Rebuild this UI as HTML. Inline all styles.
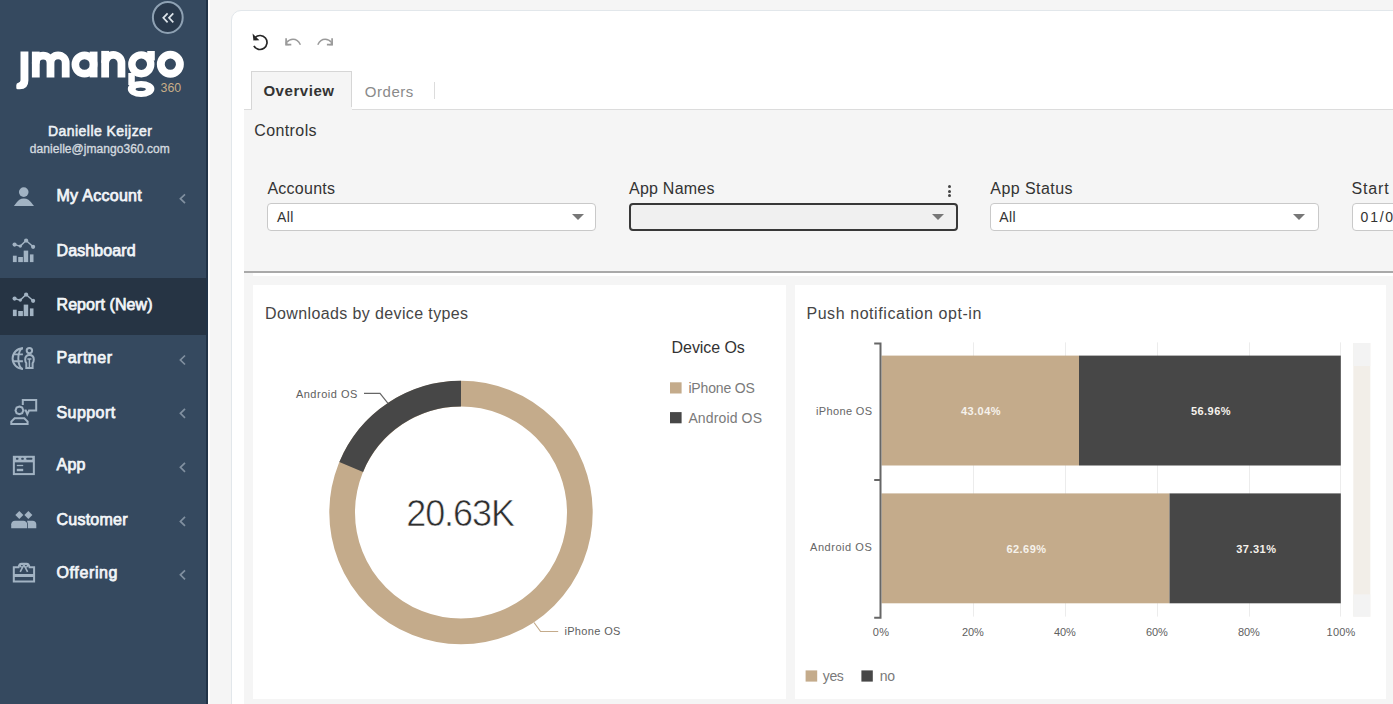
<!DOCTYPE html>
<html><head><meta charset="utf-8"><title>jmango360 Report</title>
<style>
*{box-sizing:border-box}
html,body{margin:0;padding:0}
body{width:1393px;height:704px;overflow:hidden;position:relative;background:#f5f5f5;font-family:"Liberation Sans",sans-serif}
.abs{position:absolute}
.t{position:absolute;white-space:nowrap;line-height:1;font-family:"Liberation Sans",sans-serif}
#sb{left:0;top:0;width:206px;height:704px;background:#35495f}
#sbedge{left:206px;top:0;width:2px;height:704px;background:#223448}
#sbw{left:208px;top:0;width:2px;height:704px;background:#fdfdfd}
#active{left:0;top:278px;width:206px;height:57px;background:#263444}
#card{left:230.6px;top:9.8px;width:1300px;height:900px;background:#fff;border:1px solid #e2e7eb;border-radius:10px}
#content{left:244px;top:108.5px;width:1200px;height:700px;background:#f5f5f5;border-top:1px solid #dcdcdc}
#tab{left:250.5px;top:71.2px;width:101.6px;height:38.3px;background:#f5f5f5;border:1px solid #d6d6d6;border-bottom:none}
#tabsep{left:434px;top:81.5px;width:1px;height:17.5px;background:#dcdcdc}
.sel{position:absolute;top:202.7px;height:28px;background:#fff;border:1.3px solid #c9c9c9;border-radius:4px}
.arr{position:absolute;width:0;height:0;border-left:6px solid transparent;border-right:6px solid transparent;border-top:6.5px solid #777}
#hline{left:244px;top:270.8px;width:1200px;height:2px;background:#a9a9a9}
#wstrip{left:253px;top:272.8px;width:1200px;height:3.7px;background:#fff}
.cc{position:absolute;background:#fff;top:285.3px;height:413.3px}
</style></head>
<body>
<div id="sb" class="abs"></div>
<div id="active" class="abs"></div>
<div id="sbedge" class="abs"></div>
<div id="sbw" class="abs"></div>
<div id="card" class="abs"></div>
<div id="tab" class="abs"></div>
<div id="content" class="abs"></div>
<div id="tab2" class="abs" style="left:251.5px;top:107px;width:100px;height:3px;background:#f5f5f5"></div>
<div id="tabsep" class="abs"></div>
<div class="sel" style="left:267.4px;width:329px"></div>
<div class="sel" style="left:628.5px;width:329.5px;background:#f0f0f0;border:2.2px solid #383838"></div>
<div class="sel" style="left:990.3px;width:328.5px"></div>
<div class="sel" style="left:1351.6px;width:100px"></div>
<div class="arr" style="left:571.6px;top:214.2px"></div>
<div class="arr" style="left:932.4px;top:214.2px"></div>
<div class="arr" style="left:1293.4px;top:214.2px"></div>
<div class="abs" style="left:947.6px;top:185.3px;width:3px;height:3px;border-radius:50%;background:#444"></div>
<div class="abs" style="left:947.6px;top:189.6px;width:3px;height:3px;border-radius:50%;background:#444"></div>
<div class="abs" style="left:947.6px;top:193.9px;width:3px;height:3px;border-radius:50%;background:#444"></div>
<div id="hline" class="abs"></div>
<div id="wstrip" class="abs"></div>
<div class="cc" style="left:252.6px;width:533px"></div>
<div class="cc" style="left:794.9px;width:591.5px"></div>
<svg class="abs" style="left:0;top:0" width="1393" height="704" viewBox="0 0 1393 704">
<!-- collapse button -->
<ellipse cx="167.8" cy="17.4" rx="14.9" ry="15.5" fill="#29394c" stroke="#8ea1b3" stroke-width="2"/>
<path d="M167.6,13.3 L163.3,17.8 L167.6,22.3 M173.3,13.3 L169,17.8 L173.3,22.3" fill="none" stroke="#dde4ea" stroke-width="1.7"/>
<!-- logo -->
<g fill="#ffffff">
<path d="M20.5,51.5 H28.4 V80.5 Q28.4,89.3 19.8,89.3 H17.6 Q16.3,89.3 16.3,87.8 V85.2 Q16.3,83.1 18.4,82.7 Q20.5,82.3 20.5,80.3 Z"/>
<rect x="31.9" y="51.6" width="7.8" height="12"/>
<rect x="101.25" y="50.9" width="7.8" height="12"/>
<rect x="89.7" y="51.6" width="7.8" height="25.8"/>
<path d="M147.2,51 H154.8 V60.5 H147.2 Z"/>
<path fill-rule="evenodd" d="M127.8,89 A13.3,8 0 1 0 154.4,89 A13.3,8 0 1 0 127.8,89 Z M135.6,89.2 A5.1,1.8 0 1 0 145.8,89.2 A5.1,1.8 0 1 0 135.6,89.2 Z"/>
<rect x="128.3" y="73" width="6.5" height="12"/>
</g>
<g fill="none" stroke="#ffffff" stroke-width="7.8">
<path d="M35.8,77.4 V62.9 A7.35,7.35 0 0 1 50.5,62.9 V77.4 M50.5,62.9 A7.6,7.6 0 0 1 65.7,62.9 V77.4"/>
<path d="M105.15,77.4 V62.95 A8.15,8.15 0 0 1 121.45,62.95 V77.4"/>
<circle cx="84.5" cy="64.5" r="9.15" stroke-width="7.6"/>
<circle cx="141.3" cy="64.3" r="9.45" stroke-width="7.4"/>
<circle cx="170.35" cy="64.2" r="9.55" stroke-width="7.9"/>
</g>
<text x="160.6" y="91.8" font-family="Liberation Sans" font-weight="400" font-size="12.6" fill="#c9ae88" textLength="20.6" lengthAdjust="spacingAndGlyphs">360</text>
<!-- sidebar icons -->
<g fill="#a2b3c3" stroke="none">
 <!-- person -->
 <circle cx="23.75" cy="192.1" r="4.8"/>
 <path d="M13.9,206.1 Q16.6,201.8 19.3,199.7 Q21.2,198.6 23.8,198.6 Q26.4,198.6 28.4,199.7 Q31.3,201.8 34,206.1 Z"/>
</g>
<g id="chart1" fill="#a2b3c3">
 <rect x="12.9" y="255.7" width="3.8" height="6.4"/>
 <rect x="18.2" y="257" width="4.7" height="5.1"/>
 <rect x="23.7" y="250.6" width="4.5" height="11.5"/>
 <rect x="29.9" y="254.4" width="3.6" height="7.7"/>
 <circle cx="14.6" cy="244.6" r="2.1"/>
 <circle cx="20.3" cy="246.1" r="1.7"/>
 <circle cx="26.1" cy="240.6" r="2.1"/>
 <circle cx="33.1" cy="246.8" r="2.1"/>
 <path d="M14.6,244.6 L20.3,246.1 L26.1,240.5 L33.1,246.7" fill="none" stroke="#a2b3c3" stroke-width="1.4"/>
</g>
<use href="#chart1" transform="translate(0,54)"/>
<g fill="none" stroke="#a2b3c3" stroke-width="2">
 <!-- partner globe -->
 <path d="M22.9,348.3 A10.3,10.3 0 0 0 22.9,368.9"/>
 <path d="M22.9,348.3 A4.6,10.3 0 0 0 22.9,368.9" stroke-width="1.9"/>
 <path d="M13.2,354.4 H22.9 M13,361.2 H22.9" stroke-width="1.9"/>
 <circle cx="29.4" cy="350.6" r="2.7"/>
 <path d="M26.3,367.9 V363.2 Q25.2,362 25.2,359.5 Q25.2,355 29.4,355 Q33.8,355 33.8,359.5 Q33.8,362 32.6,363.2 V367.9 Z"/>
 <path d="M27.4,359 H31.4 M29.4,359 V367.5" stroke-width="1.5"/>
 <!-- support -->
 <path d="M22.8,405 V400.1 H36.2 V410.6 H29 L27.3,414.2 L25.8,410.6 H24.5"/>
 <path d="M19.4,406.5 L22.2,407.6 L23.3,410.4 L22.2,413.2 L19.4,414.3 L16.6,413.2 L15.5,410.4 L16.6,407.6 Z"/>
 <path d="M11.3,423.9 V421.6 L14.6,418.2 H24.3 L27.6,421.6 V423.9 Z"/>
 <!-- app -->
 <rect x="13.85" y="456.8" width="20" height="17.3"/>
 <path d="M13.85,459.6 H33.85" stroke-width="5.5"/>
 <path d="M16.8,465.5 H23.2" stroke-width="1.3"/>
 <path d="M16.8,470 H23.2" stroke-width="2.4"/>
 <!-- offering -->
 <path d="M13.8,581.5 V567.2 H18.6 Q19.2,563.7 21.5,563.7 H26.6 Q28.9,563.7 29.5,567.2 H34.1 V581.5 Z"/>
 <path d="M13.8,575.5 H34.1" stroke-width="3"/>
 <path d="M20.2,571.8 L22.8,566.8 M27.6,571.8 L25,566.8" stroke-width="1.6"/>
 <ellipse cx="21.9" cy="565.7" rx="1.7" ry="1.3" stroke-width="1.3"/>
 <ellipse cx="25.9" cy="565.7" rx="1.7" ry="1.3" stroke-width="1.3"/>
</g>
<g fill="#a2b3c3">
 <!-- app holes -->
 <rect x="15.9" y="457.8" width="2.6" height="2" rx="0.8" fill="#35495f"/>
 <rect x="21.2" y="457.8" width="2.6" height="2" rx="0.8" fill="#35495f"/>
 <rect x="26.2" y="457.8" width="6.2" height="2" rx="0.8" fill="#35495f"/>
 <!-- customer -->
 <path d="M19.3,511 L23.3,515 L19.3,519 L15.3,515 Z"/>
 <path d="M28.4,511 L32.4,515 L28.4,519 L24.4,515 Z"/>
 <path d="M11.2,528.2 V524.2 Q11.5,521 15,520.8 H23.3 Q26.8,521 27.2,524 V528.2 Z"/>
 <path d="M28,528.2 V524.3 L27,520.8 H32.5 Q36.1,521 36.3,524.3 V528.2 Z"/>
</g>
<!-- chevrons -->
<g fill="none" stroke="#8190a0" stroke-width="1.7">
 <path d="M185,194.3 L180.4,198.7 L185,203.1"/>
 <path d="M185,355.5 L180.4,360 L185,364.5"/>
 <path d="M185,408.8 L180.4,413.3 L185,417.8"/>
 <path d="M185,462.8 L180.4,467.3 L185,471.8"/>
 <path d="M185,516.9 L180.4,521.4 L185,525.9"/>
 <path d="M185,570.3 L180.4,574.8 L185,579.3"/>
</g>
<!-- toolbar -->
<g fill="none" stroke-width="1.7">
 <path d="M255.1,37.5 A7,7 0 1 1 253.9,45.9" stroke="#262626" stroke-width="1.7"/>
 <path d="M252.6,33.6 L253.4,40.5 L259.4,40.2 Z" fill="#262626" stroke="none"/>
 <path d="M300.4,44.8 Q297.8,39.3 293,39.3 Q289.2,39.3 286.5,42.6" stroke="#9a9a9a" stroke-width="1.5"/>
 <path d="M286.1,38.3 V44.6 H291.3" stroke="#9a9a9a" stroke-width="1.7"/><path d="M285.6,41.5 V45.2 H289.2 Z" fill="#9a9a9a"/>
 <path d="M317.8,44.8 Q320.4,39.3 325.2,39.3 Q329,39.3 331.7,42.6" stroke="#9a9a9a" stroke-width="1.5"/>
 <path d="M332.1,38.3 V44.6 H326.9" stroke="#9a9a9a" stroke-width="1.7"/><path d="M332.6,41.5 V45.2 H329 Z" fill="#9a9a9a"/>
</g>
<!-- donut -->
<circle cx="461" cy="512.5" r="118.85" fill="none" stroke="#c4ab8b" stroke-width="25.7"/>
<path d="M351.2,467.0 A118.85,118.85 0 0 1 461,393.65" fill="none" stroke="#474747" stroke-width="25.7"/>
<path d="M364,393.4 H380 L388,403.4" fill="none" stroke="#666" stroke-width="1.2"/>
<path d="M534,622.5 L540.6,631.5 H558.2" fill="none" stroke="#c4ab8b" stroke-width="1.2"/>
<rect x="670" y="382.3" width="11.6" height="11.2" fill="#c4ab8b"/>
<rect x="670" y="412.1" width="11.6" height="11.2" fill="#474747"/>
<!-- bar chart -->
<g stroke="#ececec" stroke-width="1">
 <path d="M973.5,342.4 V616.6 M1065.5,342.4 V616.6 M1157.5,342.4 V616.6 M1249.5,342.4 V616.6 M1340.5,342.4 V616.6"/>
</g>
<rect x="881.5" y="355.6" width="197.5" height="109.9" fill="#c4ab8b"/>
<rect x="1079" y="355.6" width="261.8" height="109.9" fill="#474747"/>
<rect x="881.5" y="493.4" width="288" height="109.9" fill="#c4ab8b"/>
<rect x="1169.5" y="493.4" width="171.3" height="109.9" fill="#474747"/>
<path d="M874.2,343.4 H880.5 V617.8 H874.2 M874.2,480 H880.5" fill="none" stroke="#666" stroke-width="2"/>
<rect x="1353.3" y="343" width="17" height="273.6" fill="#f2eee8"/>
<rect x="1353.3" y="343" width="17" height="23" fill="#f3f3f3"/>
<rect x="1353.3" y="594.4" width="17" height="22.2" fill="#f3f3f3"/>
<rect x="805.6" y="670.4" width="11.6" height="11.2" fill="#c4ab8b"/>
<rect x="861.4" y="670.4" width="11.4" height="11.2" fill="#474747"/>
</svg>

<div class="t" id="t0" style="left:48.0px;top:123.90px;font-size:14px;font-weight:400;color:#eef2f6;letter-spacing:0.448px;-webkit-text-stroke:0.55px #eef2f6;">Danielle Keijzer</div>
<div class="t" id="t1" style="left:29.8px;top:143.30px;font-size:12px;font-weight:400;color:#d3d9df;letter-spacing:0.051px;-webkit-text-stroke:0.35px #d3d9df;">danielle@jmango360.com</div>
<div class="t" id="t2" style="left:56.5px;top:188.40px;font-size:16px;font-weight:400;color:#f2f5f8;letter-spacing:0.277px;-webkit-text-stroke:0.75px #f2f5f8;">My Account</div>
<div class="t" id="t3" style="left:56.5px;top:242.60px;font-size:16px;font-weight:400;color:#f2f5f8;letter-spacing:0.115px;-webkit-text-stroke:0.75px #f2f5f8;">Dashboard</div>
<div class="t" id="t4" style="left:56.5px;top:296.70px;font-size:16px;font-weight:400;color:#f2f5f8;letter-spacing:0.078px;-webkit-text-stroke:0.75px #f2f5f8;">Report (New)</div>
<div class="t" id="t5" style="left:56.5px;top:350.40px;font-size:16px;font-weight:400;color:#f2f5f8;letter-spacing:0.505px;-webkit-text-stroke:0.75px #f2f5f8;">Partner</div>
<div class="t" id="t6" style="left:56.5px;top:404.60px;font-size:16px;font-weight:400;color:#f2f5f8;letter-spacing:0.426px;-webkit-text-stroke:0.75px #f2f5f8;">Support</div>
<div class="t" id="t7" style="left:56.5px;top:457.20px;font-size:16px;font-weight:400;color:#f2f5f8;letter-spacing:0.266px;-webkit-text-stroke:0.75px #f2f5f8;">App</div>
<div class="t" id="t8" style="left:56.5px;top:511.50px;font-size:16px;font-weight:400;color:#f2f5f8;letter-spacing:0.234px;-webkit-text-stroke:0.75px #f2f5f8;">Customer</div>
<div class="t" id="t9" style="left:56.5px;top:565.40px;font-size:16px;font-weight:400;color:#f2f5f8;letter-spacing:0.625px;-webkit-text-stroke:0.75px #f2f5f8;">Offering</div>
<div class="t" id="t10" style="left:263.4px;top:83.25px;font-size:15px;font-weight:700;color:#333;letter-spacing:0.554px;">Overview</div>
<div class="t" id="t11" style="left:364.8px;top:83.65px;font-size:15px;font-weight:400;color:#8a8a8a;letter-spacing:0.531px;">Orders</div>
<div class="t" id="t12" style="left:254.2px;top:122.70px;font-size:16px;font-weight:400;color:#333;letter-spacing:0.403px;">Controls</div>
<div class="t" id="t13" style="left:267.4px;top:181.40px;font-size:16px;font-weight:400;color:#333;letter-spacing:0.255px;">Accounts</div>
<div class="t" id="t14" style="left:629.0px;top:181.40px;font-size:16px;font-weight:400;color:#333;letter-spacing:0.238px;">App Names</div>
<div class="t" id="t15" style="left:990.3px;top:181.40px;font-size:16px;font-weight:400;color:#333;letter-spacing:0.447px;">App Status</div>
<div class="t" id="t16" style="left:1351.6px;top:181.40px;font-size:16px;font-weight:400;color:#333;letter-spacing:0.801px;">Start</div>
<div class="t" id="t17" style="left:276.9px;top:210.30px;font-size:14px;font-weight:400;color:#333;letter-spacing:0.419px;">All</div>
<div class="t" id="t18" style="left:999.3px;top:210.30px;font-size:14px;font-weight:400;color:#333;letter-spacing:0.419px;">All</div>
<div class="t" id="t19" style="left:1360.6px;top:210.30px;font-size:14px;font-weight:400;color:#333;letter-spacing:1.750px;">01/0</div>
<div class="t" id="t20" style="left:265.1px;top:306.00px;font-size:16px;font-weight:400;color:#454545;letter-spacing:0.380px;">Downloads by device types</div>
<div class="t" id="t21" style="left:806.4px;top:305.90px;font-size:16px;font-weight:400;color:#454545;letter-spacing:0.571px;">Push notification opt-in</div>
<div class="t" id="t22" style="left:671.6px;top:340.40px;font-size:16px;font-weight:400;color:#333;letter-spacing:-0.075px;">Device Os</div>
<div class="t" id="t23" style="left:688.4px;top:381.10px;font-size:14px;font-weight:400;color:#7a7a7a;letter-spacing:-0.152px;">iPhone OS</div>
<div class="t" id="t24" style="left:688.4px;top:410.90px;font-size:14px;font-weight:400;color:#7a7a7a;letter-spacing:0.136px;">Android OS</div>
<div class="t" id="t25" style="left:406.2px;top:496.40px;font-size:36px;font-weight:400;color:#2e2e2e;letter-spacing:-1.062px;-webkit-text-stroke:0.6px #fff;">20.63K</div>
<div class="t" id="t26" style="left:295.9px;top:388.65px;font-size:11px;font-weight:400;color:#5e5e5e;letter-spacing:0.503px;">Android OS</div>
<div class="t" id="t27" style="left:564.4px;top:625.65px;font-size:11px;font-weight:400;color:#5e5e5e;letter-spacing:0.350px;">iPhone OS</div>
<div class="t" id="t28" style="left:816.0px;top:406.15px;font-size:11px;font-weight:400;color:#666;letter-spacing:0.350px;">iPhone OS</div>
<div class="t" id="t29" style="left:810.0px;top:542.35px;font-size:11px;font-weight:400;color:#666;letter-spacing:0.547px;">Android OS</div>
<div class="t" id="t30" style="left:961.0px;top:405.65px;font-size:11px;font-weight:700;color:#f6f2ec;letter-spacing:0.438px;">43.04%</div>
<div class="t" id="t31" style="left:1191.0px;top:405.65px;font-size:11px;font-weight:700;color:#f6f2ec;letter-spacing:0.438px;">56.96%</div>
<div class="t" id="t32" style="left:1006.5px;top:543.65px;font-size:11px;font-weight:700;color:#f6f2ec;letter-spacing:0.438px;">62.69%</div>
<div class="t" id="t33" style="left:1236.2px;top:543.65px;font-size:11px;font-weight:700;color:#f6f2ec;letter-spacing:0.497px;">37.31%</div>
<div class="t" id="t34" style="left:872.8px;top:627.25px;font-size:11px;font-weight:400;color:#606060;letter-spacing:0.294px;">0%</div>
<div class="t" id="t35" style="left:961.9px;top:627.25px;font-size:11px;font-weight:400;color:#606060;letter-spacing:-0.016px;">20%</div>
<div class="t" id="t36" style="left:1053.9px;top:627.25px;font-size:11px;font-weight:400;color:#606060;letter-spacing:-0.016px;">40%</div>
<div class="t" id="t37" style="left:1145.9px;top:627.25px;font-size:11px;font-weight:400;color:#606060;letter-spacing:-0.016px;">60%</div>
<div class="t" id="t38" style="left:1237.9px;top:627.25px;font-size:11px;font-weight:400;color:#606060;letter-spacing:-0.016px;">80%</div>
<div class="t" id="t39" style="left:1326.6px;top:627.25px;font-size:11px;font-weight:400;color:#606060;letter-spacing:0.186px;">100%</div>
<div class="t" id="t40" style="left:822.8px;top:668.70px;font-size:14px;font-weight:400;color:#7a7a7a;letter-spacing:-0.398px;">yes</div>
<div class="t" id="t41" style="left:879.8px;top:668.70px;font-size:14px;font-weight:400;color:#7a7a7a;letter-spacing:-0.378px;">no</div>
</body></html>
